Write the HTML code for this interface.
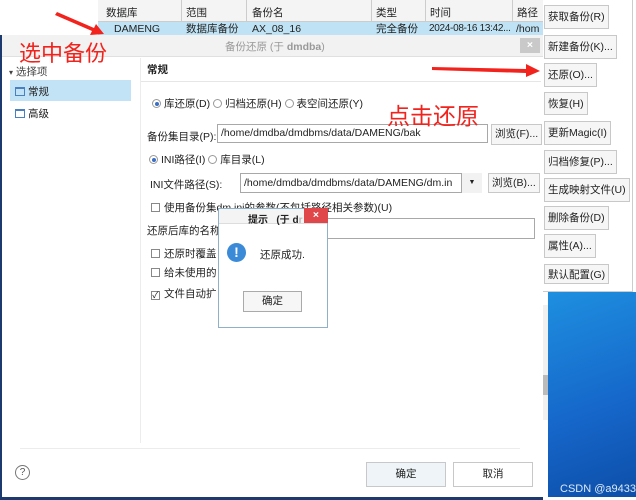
<!DOCTYPE html>
<html><head><meta charset="utf-8"><style>
*{margin:0;padding:0;box-sizing:border-box}
body{width:636px;height:500px;position:relative;overflow:hidden;background:#fff;font-family:"Liberation Sans","Noto Sans CJK SC",sans-serif;font-size:10.5px;color:#222}
.a{position:absolute;white-space:nowrap}
.btn{position:absolute;border:1px solid #c8c8c8;background:#f6f6f6;font-size:10.5px;line-height:22px;padding:0 3px}
.inp{position:absolute;border:1px solid #a8a8a8;background:#fff;font-size:10.5px;padding-left:3px;line-height:17px;overflow:hidden}
.rad{display:inline-block;width:9px;height:9px;border:1px solid #999;border-radius:50%;vertical-align:-1px;margin-right:3px;position:relative}
.rad.on::after{content:"";position:absolute;left:1.5px;top:1.5px;width:4px;height:4px;border-radius:50%;background:#3a6fc4}
.cb{display:inline-block;width:9px;height:9px;border:1px solid #888;vertical-align:-1px;margin-right:4px;font-size:9px;line-height:7px;text-align:center}
.red{color:#f2231d;font-family:"Noto Sans CJK SC",sans-serif}
</style></head><body>
<div class="a" style="left:98px;top:0;width:445px;height:22px;background:#f4f4f4;border-bottom:1px solid #ccc"></div>
<div class="a" style="left:98px;top:22px;width:445px;height:13px;background:#bfe3f4"></div>
<div class="a" style="left:106px;top:5px">数据库</div>
<div class="a" style="left:186px;top:5px">范围</div>
<div class="a" style="left:252px;top:5px">备份名</div>
<div class="a" style="left:376px;top:5px">类型</div>
<div class="a" style="left:430px;top:5px">时间</div>
<div class="a" style="left:517px;top:5px">路径</div>
<div class="a" style="left:181px;top:0;width:1px;height:22px;background:#ccc"></div>
<div class="a" style="left:246px;top:0;width:1px;height:22px;background:#ccc"></div>
<div class="a" style="left:371px;top:0;width:1px;height:22px;background:#ccc"></div>
<div class="a" style="left:425px;top:0;width:1px;height:22px;background:#ccc"></div>
<div class="a" style="left:512px;top:0;width:1px;height:22px;background:#ccc"></div>
<div class="a" style="left:114px;top:22px;line-height:14px">DAMENG</div>
<div class="a" style="left:186px;top:22px;line-height:14px">数据库备份</div>
<div class="a" style="left:252px;top:22px;line-height:14px">AX_08_16</div>
<div class="a" style="left:376px;top:22px;line-height:14px">完全备份</div>
<div class="a" style="left:429px;top:22px;line-height:14px;font-size:10px;letter-spacing:-0.3px;width:84px;overflow:hidden">2024-08-16 13:42...</div>
<div class="a" style="left:516px;top:22px;line-height:14px">/hom</div>
<div class="a" style="left:543px;top:0;width:90px;height:292px;background:#fff;border-right:1px solid #ccc;border-bottom:1px solid #ccc"></div>
<div class="a" style="left:548px;top:292px;width:88px;height:205px;background:linear-gradient(160deg,#1e8fe0,#1565c8 60%,#0d4ea8)"></div>
<div class="a" style="left:560px;top:483px;color:#dbe9f8;font-size:11px">CSDN @a9433</div>
<div class="btn" style="left:544px;top:5px;height:24px">获取备份(R)</div>
<div class="btn" style="left:544px;top:35px;height:24px">新建备份(K)...</div>
<div class="btn" style="left:544px;top:63px;height:24px">还原(O)...</div>
<div class="btn" style="left:544px;top:92px;height:23px">恢复(H)</div>
<div class="btn" style="left:544px;top:121px;height:24px">更新Magic(I)</div>
<div class="btn" style="left:544px;top:150px;height:24px">归档修复(P)...</div>
<div class="btn" style="left:544px;top:178px;height:24px">生成映射文件(U)</div>
<div class="btn" style="left:544px;top:206px;height:24px">删除备份(D)</div>
<div class="btn" style="left:544px;top:234px;height:24px">属性(A)...</div>
<div class="btn" style="left:544px;top:264px;height:20px;line-height:20px">默认配置(G)</div>
<div class="a" style="left:0;top:35px;width:543px;height:465px;background:#fff;border-left:2px solid #1d3a6e;border-bottom:3px solid #1d3a6e"></div>
<div class="a" style="left:2px;top:35px;width:541px;height:22px;background:#f2f2f2;border-bottom:1px solid #e0e0e0"></div>
<div class="a" style="left:225px;top:39px;color:#999">备份还原 (于 <b>dmdba</b>)</div>
<div class="a" style="left:520px;top:38px;width:20px;height:15px;background:#c9c9c9;color:#fff;text-align:center;line-height:15px;font-weight:bold">×</div>
<div class="a" style="left:543px;top:305px;width:5px;height:115px;background:#f0f0f0"></div>
<div class="a" style="left:543px;top:375px;width:5px;height:20px;background:#bbb"></div>
<div class="a" style="left:9px;top:64px;color:#444"><span style="font-size:8px">▾</span> 选择项</div>
<div class="a" style="left:10px;top:80px;width:121px;height:21px;background:#c2e2f6"></div>
<div class="a" style="left:15px;top:84px"><span style="display:inline-block;width:10px;height:9px;border:1px solid #4a7fc0;border-top-width:2px;vertical-align:-1px;margin-right:3px"></span>常规</div>
<div class="a" style="left:15px;top:106px"><span style="display:inline-block;width:10px;height:9px;border:1px solid #4a7fc0;border-top-width:2px;vertical-align:-1px;margin-right:3px"></span>高级</div>
<div class="a" style="left:140px;top:58px;width:1px;height:385px;background:#ececec"></div>
<div class="a" style="left:147px;top:62px;font-weight:bold">常规</div>
<div class="a" style="left:141px;top:81px;width:400px;height:1px;background:#e6e6e6"></div>
<div class="a" style="left:152px;top:96px"><span class="rad on"></span>库还原(D) <span class="rad"></span>归档还原(H) <span class="rad"></span>表空间还原(Y)</div>
<div class="a" style="left:147px;top:129px">备份集目录(P):</div>
<div class="inp" style="left:217px;top:124px;width:271px;height:19px">/home/dmdba/dmdbms/data/DAMENG/bak</div>
<div class="btn" style="left:491px;top:124px;height:21px;line-height:19px">浏览(F)...</div>
<div class="a" style="left:149px;top:152px"><span class="rad on"></span>INI路径(I) <span class="rad"></span>库目录(L)</div>
<div class="a" style="left:150px;top:177px">INI文件路径(S):</div>
<div class="inp" style="left:240px;top:173px;width:222px;height:20px;line-height:18px">/home/dmdba/dmdbms/data/DAMENG/dm.in</div>
<div class="a" style="left:462px;top:173px;width:20px;height:20px;background:#f2f2f2;font-size:7px;text-align:center;line-height:20px">▼</div>
<div class="btn" style="left:488px;top:173px;height:20px;line-height:18px">浏览(B)...</div>
<div class="a" style="left:151px;top:200px"><span class="cb"></span>使用备份集dm.ini的参数(不包括路径相关参数)(U)</div>
<div class="a" style="left:147px;top:223px">还原后库的名称</div>
<div class="inp" style="left:320px;top:218px;width:215px;height:21px"></div>
<div class="a" style="left:151px;top:246px"><span class="cb"></span>还原时覆盖</div>
<div class="a" style="left:151px;top:265px"><span class="cb"></span>给未使用的</div>
<div class="a" style="left:151px;top:286px"><span class="cb">✓</span>文件自动扩</div>
<div class="a" style="left:218px;top:208px;width:110px;height:120px;background:#fff;border:1px solid #8fb0c8"></div>
<div class="a" style="left:219px;top:209px;width:108px;height:15px;background:#f4f4f4;border-bottom:1px solid #ddd"></div>
<div class="a" style="left:248px;top:211px;font-weight:bold;font-size:10px">提示 &nbsp; (于 d<span style="color:#bbb">r</span></div>
<div class="a" style="left:304px;top:208px;width:24px;height:15px;background:#e0474b;color:#fff;text-align:center;line-height:14px;font-weight:bold">×</div>
<div class="a" style="left:227px;top:243px;width:19px;height:19px;border-radius:50%;background:#3b8ad8;color:#fff;text-align:center;font-weight:bold;font-size:14px;line-height:19px">!</div>
<div class="a" style="left:260px;top:247px">还原成功.</div>
<div class="btn" style="left:243px;top:291px;width:59px;height:21px;line-height:19px;text-align:center;border-color:#aaa">确定</div>
<div class="a" style="left:20px;top:448px;width:500px;height:1px;background:#ececec"></div>
<div class="a" style="left:15px;top:465px;width:15px;height:15px;border:1px solid #777;border-radius:50%;text-align:center;font-size:10px;line-height:13px;color:#555">?</div>
<div class="btn" style="left:366px;top:462px;width:80px;height:25px;text-align:center;background:#eef4f8">确定</div>
<div class="btn" style="left:453px;top:462px;width:80px;height:25px;text-align:center;background:#fff">取消</div>
<div class="a red" style="left:19px;top:36px;font-size:22px">选中备份</div>
<div class="a red" style="left:387px;top:97px;font-size:23px">点击还原</div>
<svg class="a" style="left:0;top:0" width="636" height="130">
<polygon points="57,12 94,28 96,24 104,34 90,35 92,31 55,15" fill="#f2231d"/>
<polygon points="432,67 526,69 526,64 540,71 526,77 526,73 432,70" fill="#f2231d"/>
</svg>
</body></html>
